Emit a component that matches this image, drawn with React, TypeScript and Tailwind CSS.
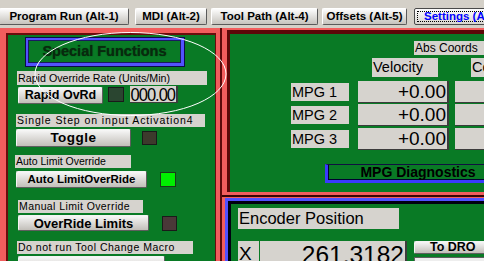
import type { ReactNode } from 'react';

function Tab({ label, className }: { label: string; className: string }) {
  return (
    <div
      className={`h-[17px] shrink-0 flex items-center justify-center rounded-[2px] border border-t-white border-l-white border-r-[#5a5a5a] border-b-[#5a5a5a] bg-linear-to-b from-[#fdfdfd] to-[#c6c3bd] text-[11.5px] font-bold text-black ${className}`}
    >
      {label}
    </div>
  );
}

function Btn({ children, className }: { children: ReactNode; className: string }) {
  return (
    <div
      className={`shrink-0 flex items-center justify-center rounded-[2px] border border-t-[#f4f4f4] border-l-[#f4f4f4] border-r-[#5e5e5e] border-b-[#5e5e5e] bg-linear-to-b from-[#f7f7f7] to-[#c2bfb9] font-bold text-black leading-none ${className}`}
    >
      {children}
    </div>
  );
}

function Label({ children, className }: { children: ReactNode; className: string }) {
  return (
    <div className={`shrink-0 bg-[#d6d3ce] text-black leading-none flex items-center ${className}`}>{children}</div>
  );
}

function ValueBox({ children, className }: { children: ReactNode; className: string }) {
  return (
    <div
      className={`shrink-0 bg-[#d6d3ce] border-r-2 border-b border-[#3c3c3c] flex items-center justify-end text-black leading-none ${className}`}
    >
      {children}
    </div>
  );
}

function MpgRow({ name, className }: { name: string; className: string }) {
  return (
    <div className={`flex items-center h-[22px] ${className}`}>
      <Label className="ml-[61px] w-[58px] h-[18px] text-[14.5px] pl-[1px]">{name}</Label>
      <ValueBox className="ml-[9px] w-[91px] h-[22px] text-[19px] pr-[1px]">+0.00</ValueBox>
      <ValueBox className="ml-[6px] w-[60px] h-[22px] text-[19px]"> </ValueBox>
    </div>
  );
}

export default function App() {
  return (
    <div className="relative w-[484px] h-[261px] overflow-hidden bg-[#d4d0c8] font-['Liberation_Sans',Arial,sans-serif]">
      {/* tab strip */}
      <div className="h-[28px] flex pt-[8px] -ml-px">
        <Tab label="Program Run (Alt-1)" className="w-[130px]" />
        <Tab label="MDI (Alt-2)" className="ml-[6px] w-[72px]" />
        <Tab label="Tool Path (Alt-4)" className="ml-[4px] w-[107px]" />
        <Tab label="Offsets (Alt-5)" className="ml-[4px] w-[85px]" />
        <div className="ml-[7px] w-[112px] h-[17px] shrink-0 rounded-[2px] border border-[#4a4a4a] bg-linear-to-b from-[#fdfdfd] to-[#d8d5cf] p-[2px]">
          <div className="h-full border border-dotted border-black flex items-center pl-[6px] text-[11.5px] font-bold text-[#0000ff] whitespace-nowrap">
            Settings (Alt-6)
          </div>
        </div>
      </div>

      <div className="flex">
        {/* left panel */}
        <div className="w-[222px] h-[233px] shrink-0 bg-[#5c0a0a] pr-[2px]">
          <div className="h-full bg-[#f25d5d] pl-[6px] pt-[5px] pr-[4px]">
            <div className="h-full bg-[#6a0c0c] pl-[2px] pt-[2px] pr-[1px]">
              <div className="h-full bg-[#097a25] flex flex-col">
                <div className="mt-[2px] ml-[17px] w-[160px] h-[30px] bg-[#0c0c4a] p-px">
                  <div className="h-full bg-[#5252ff] pt-[2px] pl-[2px] pb-[3px] pr-[3px]">
                    <div className="h-full bg-[#097a25] border border-[#1a1a60] flex items-center justify-center text-[14.5px] font-bold text-[#082a0e] [text-shadow:0_0_1px_#063a12]">
                      Special Functions
                    </div>
                  </div>
                </div>

                <Label className="mt-[4px] ml-[9px] w-[190px] h-[14px] text-[10.7px] pl-[1px]">
                  Rapid Override Rate (Units/Min)
                </Label>
                <div className="mt-[2px] ml-[10px] flex items-start">
                  <Btn className="w-[85px] h-[17px] text-[12.5px]">Rapid OvRd</Btn>
                  <div className="ml-[5px] w-[16px] h-[15px] bg-[#2a4530] border border-[#1a1a1a]" />
                  <ValueBox className="ml-[6px] -mt-px w-[48px] h-[17px] pr-[1px]">
                    <span className="inline-block text-[16.5px] tracking-[-1px] scale-y-[1.15]">000.00</span>
                  </ValueBox>
                </div>

                <Label className="mt-[10px] ml-[8px] w-[189px] h-[13px] text-[10.5px] tracking-[0.9px] pl-[1px] whitespace-nowrap">
                  Single Step on input Activation4
                </Label>
                <div className="mt-[2px] ml-[8px] flex items-center">
                  <Btn className="w-[115px] h-[18px] text-[13.5px] tracking-[0.5px]">Toggle</Btn>
                  <div className="ml-[11px] w-[15px] h-[14px] bg-[#3d3a2c] border border-[#1a1a1a]" />
                </div>

                <Label className="mt-[8px] ml-[7px] w-[116px] h-[13px] text-[10.5px] pl-px">
                  Auto Limit Override
                </Label>
                <div className="mt-[3px] ml-[8px] flex items-center">
                  <Btn className="w-[131px] h-[17px] text-[11.5px]">Auto LimitOverRide</Btn>
                  <div className="ml-[13px] w-[16px] h-[15px] bg-[#00f000] border border-[#1a3a1a]" />
                </div>

                <Label className="mt-[12px] ml-[10px] w-[125px] h-[13px] text-[10.5px] tracking-[0.4px] pl-px">
                  Manual Limit Override
                </Label>
                <div className="mt-[2px] ml-[10px] flex items-center">
                  <Btn className="w-[131px] h-[16px] text-[13px]">OverRide Limits</Btn>
                  <div className="ml-[13px] w-[15px] h-[15px] bg-[#4a3838] border border-[#1a1a1a]" />
                </div>

                <Label className="mt-[10px] ml-[9px] w-[176px] h-[13px] text-[10.5px] tracking-[0.5px] pl-px whitespace-nowrap">
                  Do not run Tool Change Macro
                </Label>
                <div className="mt-[2px] ml-[10px] flex">
                  <Btn className="w-[147px] h-[17px] text-[12px]"> </Btn>
                </div>
              </div>
            </div>
          </div>
        </div>

        {/* right column */}
        <div className="w-[262px] shrink-0 flex flex-col">
          <div className="h-[169px] bg-[#3a0404] pb-[2px]">
            <div className="h-full bg-[#f25d5d] pl-[5px] pt-[2px] pb-[3px]">
              <div className="h-full bg-[#5c0808] pl-[3px] pt-[4px]">
                <div className="h-full bg-[#097a25] flex flex-col">
                  <Label className="mt-[7px] ml-[184px] w-[80px] h-[14px] text-[12px] pl-px">Abs Coords</Label>
                  <div className="mt-[3px] flex h-[19px]">
                    <Label className="ml-[142px] w-[66px] h-[19px] text-[14.5px] pl-[1px]">Velocity</Label>
                    <Label className="ml-[33px] w-[60px] h-[19px] text-[14.5px] pl-[1px]">Coords</Label>
                  </div>
                  <MpgRow name="MPG 1" className="mt-[4px]" />
                  <MpgRow name="MPG 2" className="mt-[1px]" />
                  <MpgRow name="MPG 3" className="mt-[2px]" />
                  <div className="mt-[14px] ml-[95px] w-[183px] h-[19px] shrink-0 border-t border-t-[#101040] border-l-[3px] border-b-[3px] border-l-[#3a3aff] border-b-[#3a3aff] shadow-[inset_1px_-1px_0_#000030] flex items-center justify-center text-[14px] font-bold text-black">
                    MPG Diagnostics
                  </div>
                </div>
              </div>
            </div>
          </div>

          <div className="flex-1 bg-[#f25d5d] pl-[3px] pt-[1px]">
            <div className="h-full bg-[#5050ff] pl-[3px] pt-[3px]">
              <div className="h-full bg-[#000010] pl-[3px] pt-[3px]">
                <div className="h-full bg-[#097a25] flex flex-col">
                  <Label className="mt-[4px] ml-[7px] w-[161px] h-[21px] text-[16.5px] pl-[1px]">Encoder Position</Label>
                  <div className="mt-[12px] flex items-start">
                    <Label className="ml-[7px] w-[21px] h-[30px] text-[19px] pl-[1px] items-start pt-[3px]">X</Label>
                    <ValueBox className="ml-[1px] w-[147px] h-[30px] text-[24.5px] items-start pt-[2px] pr-[1px]">
                      261.3182
                    </ValueBox>
                    <div className="ml-[7px] flex flex-col">
                      <Btn className="w-[80px] h-[13px] text-[12.5px] justify-start pl-[15px]">To DRO</Btn>
                      <div className="mt-[3px] w-[80px] h-[10px] bg-[#eeeeee] border border-[#5e5e5e]" />
                    </div>
                  </div>
                </div>
              </div>
            </div>
          </div>
        </div>
      </div>

      <svg className="absolute inset-0 pointer-events-none" width="484" height="261">
        <ellipse cx="130.5" cy="74" rx="95.5" ry="41.5" fill="none" stroke="#ffffff" strokeWidth="1" />
      </svg>
    </div>
  );
}
